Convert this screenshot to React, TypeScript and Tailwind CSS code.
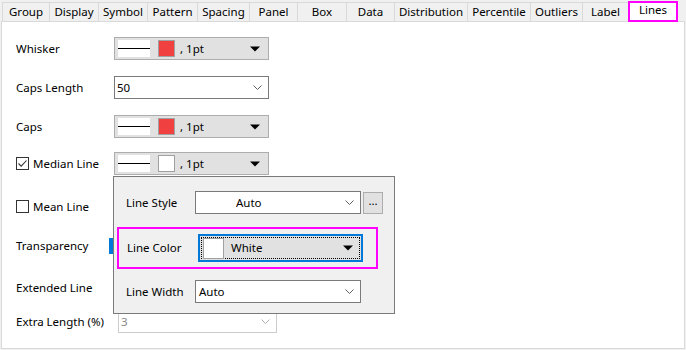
import React from "react";

const tabs = [
  { name: "Group", w: 47 },
  { name: "Display", w: 49 },
  { name: "Symbol", w: 49 },
  { name: "Pattern", w: 50 },
  { name: "Spacing", w: 52 },
  { name: "Panel", w: 48 },
  { name: "Box", w: 49 },
  { name: "Data", w: 48 },
  { name: "Distribution", w: 73 },
  { name: "Percentile", w: 63 },
  { name: "Outliers", w: 52 },
  { name: "Label", w: 46 },
];

const Arrow = () => (
  <svg width="10" height="6" viewBox="0 0 10 6" className="shrink-0">
    <path d="M0 0.5 L10 0.5 L5 5.5 Z" fill="#000" />
  </svg>
);

const Chevron = ({ color = "#606060" }: { color?: string }) => (
  <svg width="9" height="5" viewBox="0 0 9 5" className="shrink-0">
    <path d="M0.5 0.5 L4.5 4.5 L8.5 0.5" fill="none" stroke={color} strokeWidth="1" />
  </svg>
);

// line + colour + width picker
const LinePicker = ({ color }: { color: string }) => (
  <div className="flex items-center w-[155px] h-[23px] bg-[#e1e1e1] border border-[#adadad] pl-[3px] pr-[8px]">
    <div className="w-[32px] h-[17px] bg-white flex items-center">
      <div className="w-full h-px bg-black" />
    </div>
    <div
      className="w-[17px] h-[17px] ml-[8px] border border-[#a0a0a0]"
      style={{ backgroundColor: color }}
    />
    <span className="ml-[5px]">, 1pt</span>
    <div className="flex-1" />
    <Arrow />
  </div>
);

const Checkbox = ({ checked }: { checked?: boolean }) => (
  <div className="w-[13px] h-[13px] border border-[#333] bg-white flex items-center justify-center mr-[4px]">
    {checked && (
      <svg width="11" height="11" viewBox="0 0 11 11">
        <path d="M1.5 5.5 L4.2 8.2 L9.5 2.5" fill="none" stroke="#333" strokeWidth="1.1" />
      </svg>
    )}
  </div>
);

const App: React.FC = () => {
  return (
    <div
      className="w-[686px] h-[350px] bg-[#f0f0f0] text-[11.5px] text-black overflow-hidden"
      style={{ fontFamily: '"Noto Sans", "Open Sans", sans-serif' }}
    >
      {/* tab bar */}
      <div className="flex h-[21px] pl-[2px] items-end">
        {tabs.map((t) => (
          <div
            key={t.name}
            className="h-[19px] flex items-center justify-center border-t border-l border-[#d9d9d9] bg-[#f0f0f0] leading-none"
            style={{ width: t.w }}
          >
            {t.name}
          </div>
        ))}
        <div className="relative w-[50px] h-[21px] -mb-px z-10 bg-white border-2 border-[#ff00ff] flex items-center justify-center leading-none pb-[3px]">
          Lines
        </div>
      </div>

      {/* content */}
      <div className="relative w-[684px] h-[328px] ml-px bg-white border border-[#d9d9d9] pl-[14px] pt-[15px]">
        <div className="flex items-center h-[23px]">
          <span className="w-[98px]">Whisker</span>
          <LinePicker color="#f04040" />
        </div>
        <div className="flex items-center h-[23px] mt-[16px]">
          <span className="w-[98px]">Caps Length</span>
          <div className="flex items-center w-[155px] h-[23px] bg-white border border-[#7a7a7a] pl-[2px] pr-[6px]">
            <span>50</span>
            <div className="flex-1" />
            <Chevron />
          </div>
        </div>
        <div className="flex items-center h-[23px] mt-[16px]">
          <span className="w-[98px]">Caps</span>
          <LinePicker color="#f04040" />
        </div>
        <div className="flex items-center h-[23px] mt-[14px]">
          <div className="w-[98px] flex items-center">
            <Checkbox checked />
            <span>Median Line</span>
          </div>
          <LinePicker color="#ffffff" />
        </div>
        <div className="flex items-center h-[23px] mt-[20px]">
          <div className="w-[98px] flex items-center">
            <Checkbox />
            <span>Mean Line</span>
          </div>
        </div>
        <div className="flex items-center h-[23px] mt-[16px]">
          <span className="w-[93px]">Transparency</span>
          <div className="w-[8px] h-[16px] bg-[#0078d7]" />
        </div>
        <div className="flex items-center h-[23px] mt-[19px]">
          <span className="w-[98px]">Extended Line</span>
        </div>
        <div className="flex items-center h-[23px] mt-[11px]">
          <span className="w-[102px]">Extra Length (%)</span>
          <div className="flex items-center w-[159px] h-[23px] bg-white border border-[#cccccc] pl-[2px] pr-[6px] text-[#888]">
            <span>3</span>
            <div className="flex-1" />
            <Chevron color="#b0b0b0" />
          </div>
        </div>

        {/* popup */}
        <div className="absolute left-[111px] top-[154px] w-[282px] h-[138px] bg-[#f0f0f0] border border-[#7a7a7a] pl-[12px] pt-[14px]">
          <div className="flex items-center h-[23px]">
            <span className="w-[69px]">Line Style</span>
            <div className="flex items-center w-[166px] h-[23px] bg-white border border-[#7a7a7a] pr-[6px]">
              <span className="ml-[40px]">Auto</span>
              <div className="flex-1" />
              <Chevron />
            </div>
            <div className="ml-[2px] w-[20px] h-[22px] bg-[#e1e1e1] border border-[#adadad] flex items-center justify-center leading-none pb-[4px]">
              ...
            </div>
          </div>
          <div className="flex items-center h-[42px] w-[261px] -ml-[9px] mt-[13px] border-2 border-[#ff00ff] pl-[8px]">
            <span className="w-[71px]">Line Color</span>
            <div className="w-[165px] h-[28px] border-2 border-[#0078d7] bg-[#e1e1e1] p-px">
              <div className="flex items-center w-full h-full border border-dotted border-black pl-[1px] pr-[6px]">
                <div className="w-[21px] h-[21px] bg-white border border-[#a0a0a0]" />
                <span className="ml-[7px]">White</span>
                <div className="flex-1" />
                <Arrow />
              </div>
            </div>
          </div>
          <div className="flex items-center h-[23px] mt-[11px]">
            <span className="w-[69px]">Line Width</span>
            <div className="flex items-center w-[166px] h-[23px] bg-white border border-[#7a7a7a] pl-[3px] pr-[6px]">
              <span>Auto</span>
              <div className="flex-1" />
              <Chevron />
            </div>
          </div>
        </div>
      </div>
    </div>
  );
};

export default App;
